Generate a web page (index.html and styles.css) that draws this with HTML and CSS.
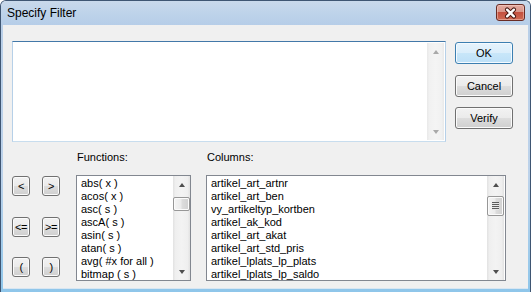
FILE: index.html
```html
<!DOCTYPE html>
<html lang="en">
<head>
    <meta charset="UTF-8">
    <title>Specify Filter</title>
    <link rel="stylesheet" href="styles.css">
</head>
<body>
    <div class="window">
        <div class="titlebar">
            <span class="title">Specify Filter</span>
            <div class="close-btn">
                <svg width="28" height="16" viewBox="0 0 28 16">
                    <path d="M10.5 4.5 L17.5 11.5 M17.5 4.5 L10.5 11.5" stroke="#4a1a14" stroke-width="4.4" stroke-linecap="round" fill="none"/>
                    <path d="M10.5 4.5 L17.5 11.5 M17.5 4.5 L10.5 11.5" stroke="#ffffff" stroke-width="2.4" stroke-linecap="round" fill="none"/>
                </svg>
            </div>
        </div>

        <div class="client">
            <!-- expression + dialog buttons -->
            <div class="top-row">
                <div class="expr">
                    <div class="expr-input"></div>
                    <div class="scrollbar disabled">
                        <span class="arrow up"></span>
                        <span class="track"></span>
                        <span class="arrow down"></span>
                    </div>
                </div>
                <div class="actions">
                    <button class="btn default">OK</button>
                    <button class="btn">Cancel</button>
                    <button class="btn">Verify</button>
                </div>
            </div>

            <!-- operators, functions, columns -->
            <div class="lower">
                <div class="ops">
                    <button class="btn op">&lt;</button>
                    <button class="btn op">&gt;</button>
                    <button class="btn op">&lt;=</button>
                    <button class="btn op">&gt;=</button>
                    <button class="btn op">(</button>
                    <button class="btn op">)</button>
                </div>

                <div class="field functions">
                    <div class="field-label">Functions:</div>
                    <div class="listbox">
                        <ul class="items">
                            <li>abs( x )</li>
                            <li>acos( x )</li>
                            <li>asc( s )</li>
                            <li>ascA( s )</li>
                            <li>asin( s )</li>
                            <li>atan( s )</li>
                            <li>avg( #x for all )</li>
                            <li>bitmap ( s )</li>
                        </ul>
                        <div class="scrollbar">
                            <span class="arrow up"></span>
                            <span class="track">
                                <span class="thumb small"></span>
                            </span>
                            <span class="arrow down"></span>
                        </div>
                    </div>
                </div>

                <div class="field columns">
                    <div class="field-label">Columns:</div>
                    <div class="listbox">
                        <ul class="items">
                            <li>artikel_art_artnr</li>
                            <li>artikel_art_ben</li>
                            <li>vy_artikeltyp_kortben</li>
                            <li>artikel_ak_kod</li>
                            <li>artikel_art_akat</li>
                            <li>artikel_art_std_pris</li>
                            <li>artikel_lplats_lp_plats</li>
                            <li>artikel_lplats_lp_saldo</li>
                        </ul>
                        <div class="scrollbar">
                            <span class="arrow up"></span>
                            <span class="track">
                                <span class="thumb grip"></span>
                            </span>
                            <span class="arrow down"></span>
                        </div>
                    </div>
                </div>
            </div>
        </div>
    </div>
</body>
</html>
```

FILE: styles.css
```css
* {
    margin: 0;
    padding: 0;
    box-sizing: border-box;
}

body {
    width: 531px;
    height: 292px;
    overflow: hidden;
    font-family: "Liberation Sans", Arial, sans-serif;
    font-size: 11px;
    color: #000;
    background: #fff;
}

.window {
    width: 531px;
    height: 292px;
    display: flex;
    flex-direction: column;
    border: 1px solid #3f5673;
    border-bottom: none;
    border-radius: 6px 6px 0 0;
    background: linear-gradient(#c6d7ea 0%, #b9cfe8 10%, #bcd2ea 60%, #8fc6ea 100%);
    overflow: hidden;
}

.titlebar {
    height: 24px;
    flex: none;
    display: flex;
    align-items: center;
    justify-content: space-between;
    padding: 0 5px 0 6px;
    background: linear-gradient(#c9d9eb 0%, #bed3ea 50%, #b6cde8 100%);
}

.title {
    font-size: 12px;
    color: #000;
}

.close-btn {
    width: 29px;
    height: 17px;
    margin-top: -1px;
    border: 1px solid #6a2c24;
    border-radius: 3px;
    background: linear-gradient(#e4aba1 0%, #d9968a 45%, #c45140 50%, #cf6a53 100%);
    box-shadow: inset 0 0 0 1px rgba(255, 220, 210, 0.45);
    display: flex;
    align-items: center;
    justify-content: center;
}

.close-btn svg {
    display: block;
}

.client {
    flex: 1;
    margin: 0 2px 3px 2px;
    background: #f0f0f0;
    padding: 16px 0 0 9px;
    border-bottom: 1px solid #d8e6f2;
}

/* top row */

.top-row {
    display: flex;
    gap: 9px;
}

.expr {
    width: 434px;
    height: 101px;
    display: flex;
    border: 1px solid #b6d0e8;
    border-top-color: #4378a8;
    border-bottom-color: #c8ddee;
    background: #fff;
    padding: 1px;
}

.expr-input {
    flex: 1;
}

.actions {
    width: 58px;
    display: flex;
    flex-direction: column;
    gap: 10.5px;
    padding-top: 1px;
}

.btn {
    font-family: "Liberation Sans", Arial, sans-serif;
    font-size: 11px;
    color: #000;
    height: 22px;
    border: 1px solid #707070;
    border-radius: 3px;
    background: linear-gradient(#f2f2f2 0%, #ebebeb 48%, #dddddd 52%, #cfcfcf 100%);
    box-shadow: inset 0 0 0 1px #fbfbfb;
    display: flex;
    align-items: center;
    justify-content: center;
}

.btn.default {
    border-color: #3c7fb1;
    background: linear-gradient(#e6f3fc 0%, #dbeefb 48%, #c8e6f9 52%, #bde0f7 100%);
    box-shadow: inset 0 0 0 1px #f4faff;
}

/* lower section */

.lower {
    display: flex;
    margin-top: 9px;
}

.ops {
    width: 64px;
    flex: none;
    padding-top: 25px;
    display: grid;
    grid-template-columns: 18px 18px;
    grid-auto-rows: 20px;
    column-gap: 12px;
    row-gap: 20.5px;
}

.btn.op {
    height: 20px;
    padding: 0;
    letter-spacing: -0.5px;
}

.field {
    display: flex;
    flex-direction: column;
}

.functions {
    width: 115px;
    margin-right: 15px;
}

.columns {
    width: 300px;
}

.field-label {
    height: 24px;
    line-height: 13px;
    padding-left: 1px;
}

.listbox {
    height: 106px;
    display: flex;
    border: 1px solid #828790;
    background: #fff;
    overflow: hidden;
}

.items {
    flex: 1;
    list-style: none;
    padding: 1px 0 0 4px;
    overflow: hidden;
    white-space: nowrap;
}

.items li {
    line-height: 13px;
    height: 13px;
}

/* scrollbars */

.scrollbar {
    width: 17px;
    flex: none;
    display: flex;
    flex-direction: column;
    background: linear-gradient(to right, #e2e2e2 0%, #efefef 15%, #f3f3f3 50%, #efefef 85%, #e2e2e2 100%);
}

.columns .scrollbar {
    margin-right: 1px;
}

.scrollbar.disabled {
    background: linear-gradient(to right, #e9e9e9 0%, #f1f1f1 15%, #f4f4f4 50%, #f1f1f1 85%, #e9e9e9 100%);
}

.arrow {
    height: 17px;
    flex: none;
    display: flex;
    align-items: center;
    justify-content: center;
}

.arrow::before {
    content: "";
    width: 0;
    height: 0;
    border-left: 3.5px solid transparent;
    border-right: 3.5px solid transparent;
}

.arrow.up::before {
    border-bottom: 4px solid #4e4e4e;
}

.arrow.down::before {
    border-top: 4px solid #4e4e4e;
}

.disabled .arrow.up::before {
    border-bottom-color: #a9a9a9;
}

.disabled .arrow.down::before {
    border-top-color: #a9a9a9;
}

.track {
    flex: 1;
    position: relative;
}

.thumb {
    display: block;
    width: 17px;
    margin-top: 4px;
    border: 1px solid #979797;
    border-radius: 2px;
    background: linear-gradient(to right, #f4f4f4 0%, #ececec 45%, #dcdcdc 55%, #d0d0d0 100%);
    box-shadow: inset 0 0 0 1px #fbfbfb;
}

.thumb.small {
    height: 14px;
}

.thumb.grip {
    height: 20px;
    margin-top: 3px;
    position: relative;
}

.thumb.grip::before {
    content: "";
    position: absolute;
    left: 4px;
    top: 5px;
    width: 7px;
    height: 8px;
    background: repeating-linear-gradient(#5c5c5c 0 1px, #e8e8e8 1px 2px);
}
```
